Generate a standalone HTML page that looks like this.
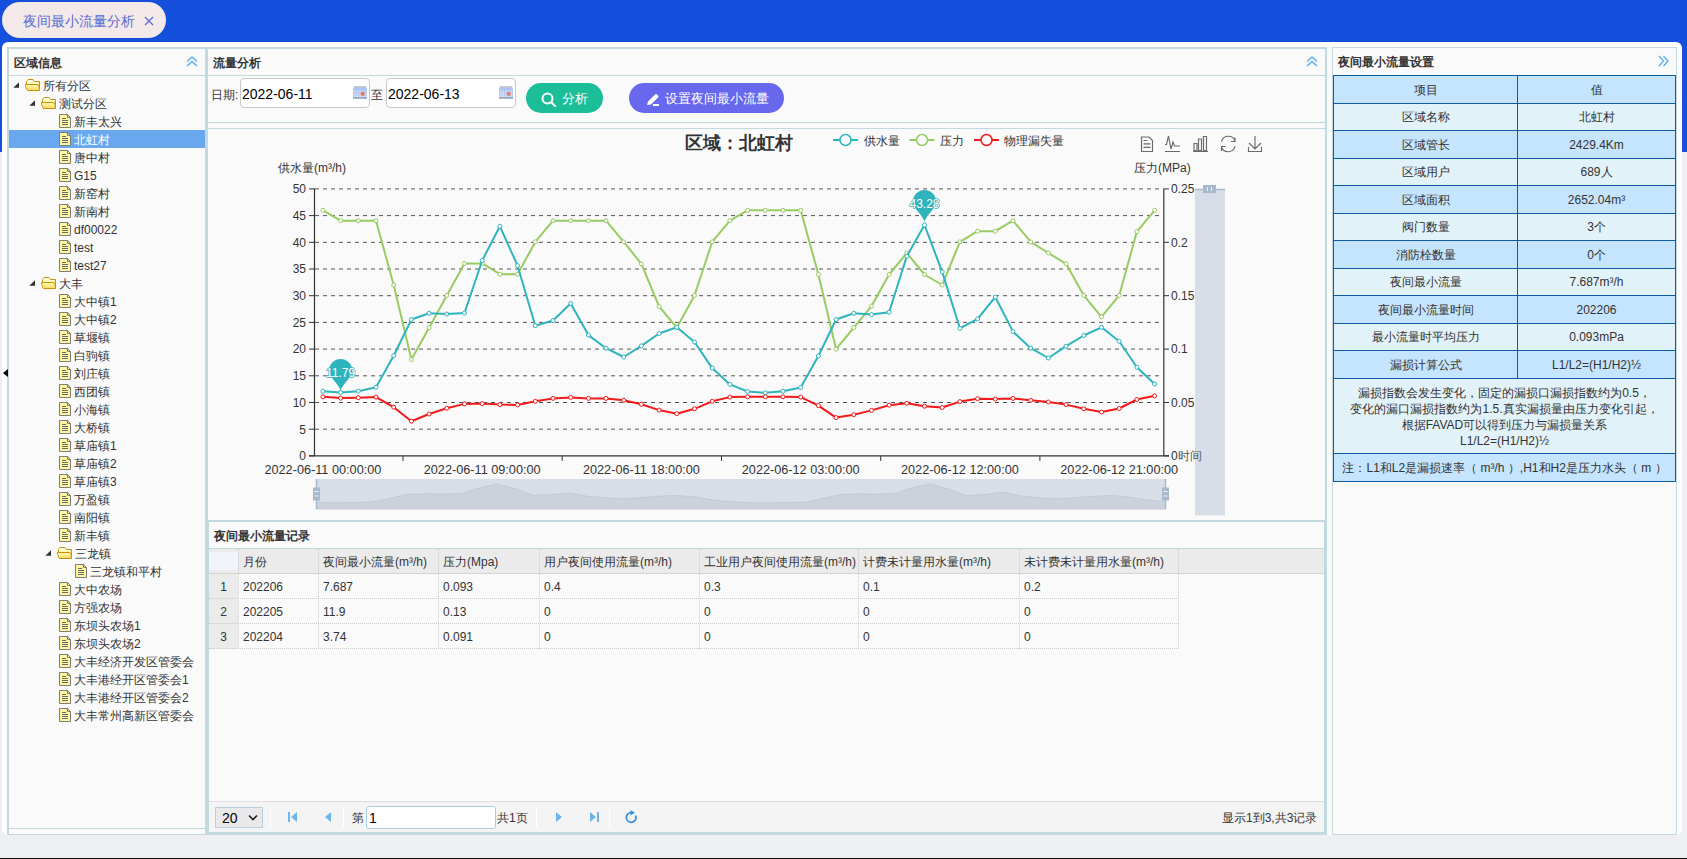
<!DOCTYPE html>
<html><head><meta charset="utf-8"><title>夜间最小流量分析</title>
<style>
*{margin:0;padding:0;box-sizing:border-box}
html,body{width:1687px;height:859px;overflow:hidden}
body{background:#eeeff3;font-family:"Liberation Sans",sans-serif;font-size:12px;color:#333;position:relative}
.a{position:absolute}
.t{position:absolute;white-space:nowrap;line-height:18px}
.tree .t{font-size:12px;color:#333}
.th{position:absolute;top:550px;height:24px;line-height:24px;font-size:12px;color:#333;white-space:nowrap;padding-left:5px;overflow:hidden}
.td{position:absolute;height:25px;line-height:25px;font-size:12px;color:#333;white-space:nowrap;padding-left:5px}
.rt{position:absolute;left:1333px;width:343px;border-top:1px solid #0f5aa5}
.rc{position:absolute;text-align:center;font-size:12px;color:#333;white-space:nowrap}
</style></head><body>

<div class="a" style="left:0;top:0;width:1687px;height:152px;background:#1550dc"></div>
<div class="a" style="left:2px;top:2px;width:164px;height:36px;border-radius:18px;background:#f3e9e9"></div>
<div class="t" style="left:23px;top:12px;font-size:14px;color:#5a6cd6">夜间最小流量分析</div>
<svg class="a" style="left:144px;top:16px" width="10" height="10"><path d="M1 1L9 9M9 1L1 9" stroke="#5a6cd6" stroke-width="1.3"/></svg>
<div class="a" style="left:2px;top:42px;width:1680px;height:793px;border-radius:6px;background:#fff"></div>
<div class="a" style="left:9px;top:49px;width:196px;height:785px;background:#fafafa"></div>
<div class="a" style="left:7px;top:47px;width:201px;height:2px;background:#c3d9e0"></div>
<div class="a" style="left:7px;top:47px;width:2px;height:788px;background:#c3d9e0"></div>
<div class="a" style="left:205px;top:47px;width:3px;height:788px;background:#c3d9e0"></div>
<div class="a" style="left:9px;top:75px;width:196px;height:1px;background:#c3d9e0"></div>
<div class="a" style="left:9px;top:828px;width:196px;height:1px;background:#c3d9e0"></div>
<div class="a" style="left:7px;top:834px;width:201px;height:1px;background:#c3d9e0"></div>
<div class="t" style="left:14px;top:54px;font-weight:bold;font-size:12px;color:#333">区域信息</div>
<svg class="a" style="left:186px;top:56px" width="12" height="11"><path d="M1 5.5L6 1L11 5.5M1 10L6 5.5L11 10" fill="none" stroke="#5aaef0" stroke-width="1.4"/></svg>
<svg class="a" style="left:2px;top:368px" width="7" height="10"><path d="M1 5L6 1L6 9Z" fill="#000"/></svg>
<div class="tree">
<svg class="a" style="left:13px;top:82px" width="7" height="7"><path d="M6 0.3L6 5.8L0.3 5.8Z" fill="#333"/></svg>
<svg class="a" style="left:25px;top:78px" width="16" height="14"><defs><linearGradient id="fb0" x1="0" y1="0" x2="0" y2="1"><stop offset="0" stop-color="#ffffff"/><stop offset="0.5" stop-color="#fff9a0"/><stop offset="1" stop-color="#f8d860"/></linearGradient><linearGradient id="ff0" x1="0" y1="0" x2="0" y2="1"><stop offset="0" stop-color="#fffbb0"/><stop offset="1" stop-color="#fbd862"/></linearGradient></defs><path d="M1.5 7V3.5L3 1.5H8L9.5 3.5H14.5V12" fill="url(#fb0)" stroke="#c8900c" stroke-width="1"/><path d="M0.5 6.5H12Q13.5 6.5 14 8L14.5 12.5H2.5L0.5 8.5Z" fill="url(#ff0)" stroke="#c8900c" stroke-width="1" stroke-linejoin="round"/></svg>
<div class="t" style="left:43px;top:77px;color:#333">所有分区</div>
<svg class="a" style="left:29px;top:100px" width="7" height="7"><path d="M6 0.3L6 5.8L0.3 5.8Z" fill="#333"/></svg>
<svg class="a" style="left:41px;top:96px" width="16" height="14"><defs><linearGradient id="fb1" x1="0" y1="0" x2="0" y2="1"><stop offset="0" stop-color="#ffffff"/><stop offset="0.5" stop-color="#fff9a0"/><stop offset="1" stop-color="#f8d860"/></linearGradient><linearGradient id="ff1" x1="0" y1="0" x2="0" y2="1"><stop offset="0" stop-color="#fffbb0"/><stop offset="1" stop-color="#fbd862"/></linearGradient></defs><path d="M1.5 7V3.5L3 1.5H8L9.5 3.5H14.5V12" fill="url(#fb1)" stroke="#c8900c" stroke-width="1"/><path d="M0.5 6.5H12Q13.5 6.5 14 8L14.5 12.5H2.5L0.5 8.5Z" fill="url(#ff1)" stroke="#c8900c" stroke-width="1" stroke-linejoin="round"/></svg>
<div class="t" style="left:59px;top:95px;color:#333">测试分区</div>
<svg class="a" style="left:59px;top:114px" width="13" height="15"><path d="M0.5 0.5L8.5 0.5L11.5 3.5L11.5 13.5L0.5 13.5Z" fill="#fff8a0" stroke="#7c7c7c" stroke-width="1"/><path d="M8.5 0.5V3.5H11.5" fill="none" stroke="#7c7c7c" stroke-width="1"/><path d="M3 4.5H7M3 6.5H9M3 8.5H9M3 10.5H9" stroke="#6a6a6a" stroke-width="1"/></svg>
<div class="t" style="left:74px;top:113px;color:#333">新丰太兴</div>
<div class="a" style="left:9px;top:130px;width:196px;height:18px;background:#69a8ef"></div>
<svg class="a" style="left:59px;top:132px" width="13" height="15"><path d="M0.5 0.5L8.5 0.5L11.5 3.5L11.5 13.5L0.5 13.5Z" fill="#fff8a0" stroke="#7c7c7c" stroke-width="1"/><path d="M8.5 0.5V3.5H11.5" fill="none" stroke="#7c7c7c" stroke-width="1"/><path d="M3 4.5H7M3 6.5H9M3 8.5H9M3 10.5H9" stroke="#6a6a6a" stroke-width="1"/></svg>
<div class="t" style="left:74px;top:131px;color:#fff">北虹村</div>
<svg class="a" style="left:59px;top:150px" width="13" height="15"><path d="M0.5 0.5L8.5 0.5L11.5 3.5L11.5 13.5L0.5 13.5Z" fill="#fff8a0" stroke="#7c7c7c" stroke-width="1"/><path d="M8.5 0.5V3.5H11.5" fill="none" stroke="#7c7c7c" stroke-width="1"/><path d="M3 4.5H7M3 6.5H9M3 8.5H9M3 10.5H9" stroke="#6a6a6a" stroke-width="1"/></svg>
<div class="t" style="left:74px;top:149px;color:#333">唐中村</div>
<svg class="a" style="left:59px;top:168px" width="13" height="15"><path d="M0.5 0.5L8.5 0.5L11.5 3.5L11.5 13.5L0.5 13.5Z" fill="#fff8a0" stroke="#7c7c7c" stroke-width="1"/><path d="M8.5 0.5V3.5H11.5" fill="none" stroke="#7c7c7c" stroke-width="1"/><path d="M3 4.5H7M3 6.5H9M3 8.5H9M3 10.5H9" stroke="#6a6a6a" stroke-width="1"/></svg>
<div class="t" style="left:74px;top:167px;color:#333">G15</div>
<svg class="a" style="left:59px;top:186px" width="13" height="15"><path d="M0.5 0.5L8.5 0.5L11.5 3.5L11.5 13.5L0.5 13.5Z" fill="#fff8a0" stroke="#7c7c7c" stroke-width="1"/><path d="M8.5 0.5V3.5H11.5" fill="none" stroke="#7c7c7c" stroke-width="1"/><path d="M3 4.5H7M3 6.5H9M3 8.5H9M3 10.5H9" stroke="#6a6a6a" stroke-width="1"/></svg>
<div class="t" style="left:74px;top:185px;color:#333">新窑村</div>
<svg class="a" style="left:59px;top:204px" width="13" height="15"><path d="M0.5 0.5L8.5 0.5L11.5 3.5L11.5 13.5L0.5 13.5Z" fill="#fff8a0" stroke="#7c7c7c" stroke-width="1"/><path d="M8.5 0.5V3.5H11.5" fill="none" stroke="#7c7c7c" stroke-width="1"/><path d="M3 4.5H7M3 6.5H9M3 8.5H9M3 10.5H9" stroke="#6a6a6a" stroke-width="1"/></svg>
<div class="t" style="left:74px;top:203px;color:#333">新南村</div>
<svg class="a" style="left:59px;top:222px" width="13" height="15"><path d="M0.5 0.5L8.5 0.5L11.5 3.5L11.5 13.5L0.5 13.5Z" fill="#fff8a0" stroke="#7c7c7c" stroke-width="1"/><path d="M8.5 0.5V3.5H11.5" fill="none" stroke="#7c7c7c" stroke-width="1"/><path d="M3 4.5H7M3 6.5H9M3 8.5H9M3 10.5H9" stroke="#6a6a6a" stroke-width="1"/></svg>
<div class="t" style="left:74px;top:221px;color:#333">df00022</div>
<svg class="a" style="left:59px;top:240px" width="13" height="15"><path d="M0.5 0.5L8.5 0.5L11.5 3.5L11.5 13.5L0.5 13.5Z" fill="#fff8a0" stroke="#7c7c7c" stroke-width="1"/><path d="M8.5 0.5V3.5H11.5" fill="none" stroke="#7c7c7c" stroke-width="1"/><path d="M3 4.5H7M3 6.5H9M3 8.5H9M3 10.5H9" stroke="#6a6a6a" stroke-width="1"/></svg>
<div class="t" style="left:74px;top:239px;color:#333">test</div>
<svg class="a" style="left:59px;top:258px" width="13" height="15"><path d="M0.5 0.5L8.5 0.5L11.5 3.5L11.5 13.5L0.5 13.5Z" fill="#fff8a0" stroke="#7c7c7c" stroke-width="1"/><path d="M8.5 0.5V3.5H11.5" fill="none" stroke="#7c7c7c" stroke-width="1"/><path d="M3 4.5H7M3 6.5H9M3 8.5H9M3 10.5H9" stroke="#6a6a6a" stroke-width="1"/></svg>
<div class="t" style="left:74px;top:257px;color:#333">test27</div>
<svg class="a" style="left:29px;top:280px" width="7" height="7"><path d="M6 0.3L6 5.8L0.3 5.8Z" fill="#333"/></svg>
<svg class="a" style="left:41px;top:276px" width="16" height="14"><defs><linearGradient id="fb11" x1="0" y1="0" x2="0" y2="1"><stop offset="0" stop-color="#ffffff"/><stop offset="0.5" stop-color="#fff9a0"/><stop offset="1" stop-color="#f8d860"/></linearGradient><linearGradient id="ff11" x1="0" y1="0" x2="0" y2="1"><stop offset="0" stop-color="#fffbb0"/><stop offset="1" stop-color="#fbd862"/></linearGradient></defs><path d="M1.5 7V3.5L3 1.5H8L9.5 3.5H14.5V12" fill="url(#fb11)" stroke="#c8900c" stroke-width="1"/><path d="M0.5 6.5H12Q13.5 6.5 14 8L14.5 12.5H2.5L0.5 8.5Z" fill="url(#ff11)" stroke="#c8900c" stroke-width="1" stroke-linejoin="round"/></svg>
<div class="t" style="left:59px;top:275px;color:#333">大丰</div>
<svg class="a" style="left:59px;top:294px" width="13" height="15"><path d="M0.5 0.5L8.5 0.5L11.5 3.5L11.5 13.5L0.5 13.5Z" fill="#fff8a0" stroke="#7c7c7c" stroke-width="1"/><path d="M8.5 0.5V3.5H11.5" fill="none" stroke="#7c7c7c" stroke-width="1"/><path d="M3 4.5H7M3 6.5H9M3 8.5H9M3 10.5H9" stroke="#6a6a6a" stroke-width="1"/></svg>
<div class="t" style="left:74px;top:293px;color:#333">大中镇1</div>
<svg class="a" style="left:59px;top:312px" width="13" height="15"><path d="M0.5 0.5L8.5 0.5L11.5 3.5L11.5 13.5L0.5 13.5Z" fill="#fff8a0" stroke="#7c7c7c" stroke-width="1"/><path d="M8.5 0.5V3.5H11.5" fill="none" stroke="#7c7c7c" stroke-width="1"/><path d="M3 4.5H7M3 6.5H9M3 8.5H9M3 10.5H9" stroke="#6a6a6a" stroke-width="1"/></svg>
<div class="t" style="left:74px;top:311px;color:#333">大中镇2</div>
<svg class="a" style="left:59px;top:330px" width="13" height="15"><path d="M0.5 0.5L8.5 0.5L11.5 3.5L11.5 13.5L0.5 13.5Z" fill="#fff8a0" stroke="#7c7c7c" stroke-width="1"/><path d="M8.5 0.5V3.5H11.5" fill="none" stroke="#7c7c7c" stroke-width="1"/><path d="M3 4.5H7M3 6.5H9M3 8.5H9M3 10.5H9" stroke="#6a6a6a" stroke-width="1"/></svg>
<div class="t" style="left:74px;top:329px;color:#333">草堰镇</div>
<svg class="a" style="left:59px;top:348px" width="13" height="15"><path d="M0.5 0.5L8.5 0.5L11.5 3.5L11.5 13.5L0.5 13.5Z" fill="#fff8a0" stroke="#7c7c7c" stroke-width="1"/><path d="M8.5 0.5V3.5H11.5" fill="none" stroke="#7c7c7c" stroke-width="1"/><path d="M3 4.5H7M3 6.5H9M3 8.5H9M3 10.5H9" stroke="#6a6a6a" stroke-width="1"/></svg>
<div class="t" style="left:74px;top:347px;color:#333">白驹镇</div>
<svg class="a" style="left:59px;top:366px" width="13" height="15"><path d="M0.5 0.5L8.5 0.5L11.5 3.5L11.5 13.5L0.5 13.5Z" fill="#fff8a0" stroke="#7c7c7c" stroke-width="1"/><path d="M8.5 0.5V3.5H11.5" fill="none" stroke="#7c7c7c" stroke-width="1"/><path d="M3 4.5H7M3 6.5H9M3 8.5H9M3 10.5H9" stroke="#6a6a6a" stroke-width="1"/></svg>
<div class="t" style="left:74px;top:365px;color:#333">刘庄镇</div>
<svg class="a" style="left:59px;top:384px" width="13" height="15"><path d="M0.5 0.5L8.5 0.5L11.5 3.5L11.5 13.5L0.5 13.5Z" fill="#fff8a0" stroke="#7c7c7c" stroke-width="1"/><path d="M8.5 0.5V3.5H11.5" fill="none" stroke="#7c7c7c" stroke-width="1"/><path d="M3 4.5H7M3 6.5H9M3 8.5H9M3 10.5H9" stroke="#6a6a6a" stroke-width="1"/></svg>
<div class="t" style="left:74px;top:383px;color:#333">西团镇</div>
<svg class="a" style="left:59px;top:402px" width="13" height="15"><path d="M0.5 0.5L8.5 0.5L11.5 3.5L11.5 13.5L0.5 13.5Z" fill="#fff8a0" stroke="#7c7c7c" stroke-width="1"/><path d="M8.5 0.5V3.5H11.5" fill="none" stroke="#7c7c7c" stroke-width="1"/><path d="M3 4.5H7M3 6.5H9M3 8.5H9M3 10.5H9" stroke="#6a6a6a" stroke-width="1"/></svg>
<div class="t" style="left:74px;top:401px;color:#333">小海镇</div>
<svg class="a" style="left:59px;top:420px" width="13" height="15"><path d="M0.5 0.5L8.5 0.5L11.5 3.5L11.5 13.5L0.5 13.5Z" fill="#fff8a0" stroke="#7c7c7c" stroke-width="1"/><path d="M8.5 0.5V3.5H11.5" fill="none" stroke="#7c7c7c" stroke-width="1"/><path d="M3 4.5H7M3 6.5H9M3 8.5H9M3 10.5H9" stroke="#6a6a6a" stroke-width="1"/></svg>
<div class="t" style="left:74px;top:419px;color:#333">大桥镇</div>
<svg class="a" style="left:59px;top:438px" width="13" height="15"><path d="M0.5 0.5L8.5 0.5L11.5 3.5L11.5 13.5L0.5 13.5Z" fill="#fff8a0" stroke="#7c7c7c" stroke-width="1"/><path d="M8.5 0.5V3.5H11.5" fill="none" stroke="#7c7c7c" stroke-width="1"/><path d="M3 4.5H7M3 6.5H9M3 8.5H9M3 10.5H9" stroke="#6a6a6a" stroke-width="1"/></svg>
<div class="t" style="left:74px;top:437px;color:#333">草庙镇1</div>
<svg class="a" style="left:59px;top:456px" width="13" height="15"><path d="M0.5 0.5L8.5 0.5L11.5 3.5L11.5 13.5L0.5 13.5Z" fill="#fff8a0" stroke="#7c7c7c" stroke-width="1"/><path d="M8.5 0.5V3.5H11.5" fill="none" stroke="#7c7c7c" stroke-width="1"/><path d="M3 4.5H7M3 6.5H9M3 8.5H9M3 10.5H9" stroke="#6a6a6a" stroke-width="1"/></svg>
<div class="t" style="left:74px;top:455px;color:#333">草庙镇2</div>
<svg class="a" style="left:59px;top:474px" width="13" height="15"><path d="M0.5 0.5L8.5 0.5L11.5 3.5L11.5 13.5L0.5 13.5Z" fill="#fff8a0" stroke="#7c7c7c" stroke-width="1"/><path d="M8.5 0.5V3.5H11.5" fill="none" stroke="#7c7c7c" stroke-width="1"/><path d="M3 4.5H7M3 6.5H9M3 8.5H9M3 10.5H9" stroke="#6a6a6a" stroke-width="1"/></svg>
<div class="t" style="left:74px;top:473px;color:#333">草庙镇3</div>
<svg class="a" style="left:59px;top:492px" width="13" height="15"><path d="M0.5 0.5L8.5 0.5L11.5 3.5L11.5 13.5L0.5 13.5Z" fill="#fff8a0" stroke="#7c7c7c" stroke-width="1"/><path d="M8.5 0.5V3.5H11.5" fill="none" stroke="#7c7c7c" stroke-width="1"/><path d="M3 4.5H7M3 6.5H9M3 8.5H9M3 10.5H9" stroke="#6a6a6a" stroke-width="1"/></svg>
<div class="t" style="left:74px;top:491px;color:#333">万盈镇</div>
<svg class="a" style="left:59px;top:510px" width="13" height="15"><path d="M0.5 0.5L8.5 0.5L11.5 3.5L11.5 13.5L0.5 13.5Z" fill="#fff8a0" stroke="#7c7c7c" stroke-width="1"/><path d="M8.5 0.5V3.5H11.5" fill="none" stroke="#7c7c7c" stroke-width="1"/><path d="M3 4.5H7M3 6.5H9M3 8.5H9M3 10.5H9" stroke="#6a6a6a" stroke-width="1"/></svg>
<div class="t" style="left:74px;top:509px;color:#333">南阳镇</div>
<svg class="a" style="left:59px;top:528px" width="13" height="15"><path d="M0.5 0.5L8.5 0.5L11.5 3.5L11.5 13.5L0.5 13.5Z" fill="#fff8a0" stroke="#7c7c7c" stroke-width="1"/><path d="M8.5 0.5V3.5H11.5" fill="none" stroke="#7c7c7c" stroke-width="1"/><path d="M3 4.5H7M3 6.5H9M3 8.5H9M3 10.5H9" stroke="#6a6a6a" stroke-width="1"/></svg>
<div class="t" style="left:74px;top:527px;color:#333">新丰镇</div>
<svg class="a" style="left:45px;top:550px" width="7" height="7"><path d="M6 0.3L6 5.8L0.3 5.8Z" fill="#333"/></svg>
<svg class="a" style="left:57px;top:546px" width="16" height="14"><defs><linearGradient id="fb26" x1="0" y1="0" x2="0" y2="1"><stop offset="0" stop-color="#ffffff"/><stop offset="0.5" stop-color="#fff9a0"/><stop offset="1" stop-color="#f8d860"/></linearGradient><linearGradient id="ff26" x1="0" y1="0" x2="0" y2="1"><stop offset="0" stop-color="#fffbb0"/><stop offset="1" stop-color="#fbd862"/></linearGradient></defs><path d="M1.5 7V3.5L3 1.5H8L9.5 3.5H14.5V12" fill="url(#fb26)" stroke="#c8900c" stroke-width="1"/><path d="M0.5 6.5H12Q13.5 6.5 14 8L14.5 12.5H2.5L0.5 8.5Z" fill="url(#ff26)" stroke="#c8900c" stroke-width="1" stroke-linejoin="round"/></svg>
<div class="t" style="left:75px;top:545px;color:#333">三龙镇</div>
<svg class="a" style="left:75px;top:564px" width="13" height="15"><path d="M0.5 0.5L8.5 0.5L11.5 3.5L11.5 13.5L0.5 13.5Z" fill="#fff8a0" stroke="#7c7c7c" stroke-width="1"/><path d="M8.5 0.5V3.5H11.5" fill="none" stroke="#7c7c7c" stroke-width="1"/><path d="M3 4.5H7M3 6.5H9M3 8.5H9M3 10.5H9" stroke="#6a6a6a" stroke-width="1"/></svg>
<div class="t" style="left:90px;top:563px;color:#333">三龙镇和平村</div>
<svg class="a" style="left:59px;top:582px" width="13" height="15"><path d="M0.5 0.5L8.5 0.5L11.5 3.5L11.5 13.5L0.5 13.5Z" fill="#fff8a0" stroke="#7c7c7c" stroke-width="1"/><path d="M8.5 0.5V3.5H11.5" fill="none" stroke="#7c7c7c" stroke-width="1"/><path d="M3 4.5H7M3 6.5H9M3 8.5H9M3 10.5H9" stroke="#6a6a6a" stroke-width="1"/></svg>
<div class="t" style="left:74px;top:581px;color:#333">大中农场</div>
<svg class="a" style="left:59px;top:600px" width="13" height="15"><path d="M0.5 0.5L8.5 0.5L11.5 3.5L11.5 13.5L0.5 13.5Z" fill="#fff8a0" stroke="#7c7c7c" stroke-width="1"/><path d="M8.5 0.5V3.5H11.5" fill="none" stroke="#7c7c7c" stroke-width="1"/><path d="M3 4.5H7M3 6.5H9M3 8.5H9M3 10.5H9" stroke="#6a6a6a" stroke-width="1"/></svg>
<div class="t" style="left:74px;top:599px;color:#333">方强农场</div>
<svg class="a" style="left:59px;top:618px" width="13" height="15"><path d="M0.5 0.5L8.5 0.5L11.5 3.5L11.5 13.5L0.5 13.5Z" fill="#fff8a0" stroke="#7c7c7c" stroke-width="1"/><path d="M8.5 0.5V3.5H11.5" fill="none" stroke="#7c7c7c" stroke-width="1"/><path d="M3 4.5H7M3 6.5H9M3 8.5H9M3 10.5H9" stroke="#6a6a6a" stroke-width="1"/></svg>
<div class="t" style="left:74px;top:617px;color:#333">东坝头农场1</div>
<svg class="a" style="left:59px;top:636px" width="13" height="15"><path d="M0.5 0.5L8.5 0.5L11.5 3.5L11.5 13.5L0.5 13.5Z" fill="#fff8a0" stroke="#7c7c7c" stroke-width="1"/><path d="M8.5 0.5V3.5H11.5" fill="none" stroke="#7c7c7c" stroke-width="1"/><path d="M3 4.5H7M3 6.5H9M3 8.5H9M3 10.5H9" stroke="#6a6a6a" stroke-width="1"/></svg>
<div class="t" style="left:74px;top:635px;color:#333">东坝头农场2</div>
<svg class="a" style="left:59px;top:654px" width="13" height="15"><path d="M0.5 0.5L8.5 0.5L11.5 3.5L11.5 13.5L0.5 13.5Z" fill="#fff8a0" stroke="#7c7c7c" stroke-width="1"/><path d="M8.5 0.5V3.5H11.5" fill="none" stroke="#7c7c7c" stroke-width="1"/><path d="M3 4.5H7M3 6.5H9M3 8.5H9M3 10.5H9" stroke="#6a6a6a" stroke-width="1"/></svg>
<div class="t" style="left:74px;top:653px;color:#333">大丰经济开发区管委会</div>
<svg class="a" style="left:59px;top:672px" width="13" height="15"><path d="M0.5 0.5L8.5 0.5L11.5 3.5L11.5 13.5L0.5 13.5Z" fill="#fff8a0" stroke="#7c7c7c" stroke-width="1"/><path d="M8.5 0.5V3.5H11.5" fill="none" stroke="#7c7c7c" stroke-width="1"/><path d="M3 4.5H7M3 6.5H9M3 8.5H9M3 10.5H9" stroke="#6a6a6a" stroke-width="1"/></svg>
<div class="t" style="left:74px;top:671px;color:#333">大丰港经开区管委会1</div>
<svg class="a" style="left:59px;top:690px" width="13" height="15"><path d="M0.5 0.5L8.5 0.5L11.5 3.5L11.5 13.5L0.5 13.5Z" fill="#fff8a0" stroke="#7c7c7c" stroke-width="1"/><path d="M8.5 0.5V3.5H11.5" fill="none" stroke="#7c7c7c" stroke-width="1"/><path d="M3 4.5H7M3 6.5H9M3 8.5H9M3 10.5H9" stroke="#6a6a6a" stroke-width="1"/></svg>
<div class="t" style="left:74px;top:689px;color:#333">大丰港经开区管委会2</div>
<svg class="a" style="left:59px;top:708px" width="13" height="15"><path d="M0.5 0.5L8.5 0.5L11.5 3.5L11.5 13.5L0.5 13.5Z" fill="#fff8a0" stroke="#7c7c7c" stroke-width="1"/><path d="M8.5 0.5V3.5H11.5" fill="none" stroke="#7c7c7c" stroke-width="1"/><path d="M3 4.5H7M3 6.5H9M3 8.5H9M3 10.5H9" stroke="#6a6a6a" stroke-width="1"/></svg>
<div class="t" style="left:74px;top:707px;color:#333">大丰常州高新区管委会</div>
</div>
<div class="a" style="left:208px;top:49px;width:1117px;height:783px;background:#fafafa"></div>
<div class="a" style="left:208px;top:47px;width:1119px;height:2px;background:#c3d9e0"></div>
<div class="a" style="left:1327px;top:47px;width:5px;height:788px;background:#fafafa"></div>
<div class="a" style="left:1325px;top:47px;width:2px;height:475px;background:#c3d9e0"></div>
<div class="a" style="left:1324px;top:522px;width:3px;height:313px;background:#c3d9e0"></div>
<div class="a" style="left:208px;top:522px;width:1px;height:313px;background:#c3d9e0"></div>
<div class="a" style="left:208px;top:832px;width:1119px;height:3px;background:#c3d9e0"></div>
<div class="a" style="left:208px;top:75px;width:1117px;height:1px;background:#c3d9e0"></div>
<div class="a" style="left:208px;top:122px;width:1117px;height:1px;background:#c3d9e0"></div>
<div class="a" style="left:208px;top:128px;width:1117px;height:1px;background:#c3d9e0"></div>
<div class="a" style="left:208px;top:520px;width:1117px;height:2px;background:#c3d9e0"></div>
<div class="a" style="left:208px;top:548px;width:1117px;height:1px;background:#c3d9e0"></div>
<div class="t" style="left:213px;top:54px;font-weight:bold;font-size:12px;color:#333">流量分析</div>
<svg class="a" style="left:1306px;top:56px" width="12" height="11"><path d="M1 5.5L6 1L11 5.5M1 10L6 5.5L11 10" fill="none" stroke="#5aaef0" stroke-width="1.4"/></svg>
<div class="t" style="left:211px;top:86px;font-size:12px;color:#333">日期:</div>
<div class="a" style="left:240px;top:78px;width:130px;height:30px;border:1px solid #c8c8c8;border-radius:4px;background:#fff"></div>
<div class="t" style="left:242px;top:85px;font-size:14px;color:#000">2022-06-11</div>
<svg class="a" style="left:353px;top:86px" width="14" height="13"><defs><linearGradient id="cg353" x1="0" y1="0" x2="0" y2="1"><stop offset="0" stop-color="#a9c2f4"/><stop offset="1" stop-color="#c4d3ee"/></linearGradient></defs><rect x="1" y="0" width="12" height="2" fill="#c9c9c9"/><rect x="0" y="1.5" width="14" height="11" fill="url(#cg353)"/><rect x="0" y="11" width="14" height="1.8" fill="#9aa9c2"/><path d="M1 5.2H13M1 7.8H13M1 10.2H13" stroke="#fff" stroke-width="0.9" stroke-dasharray="1.2 1.6" opacity="0.85"/><circle cx="9.7" cy="7.8" r="2.1" fill="#e87a5a"/></svg>
<div class="a" style="left:386px;top:78px;width:130px;height:30px;border:1px solid #c8c8c8;border-radius:4px;background:#fff"></div>
<div class="t" style="left:388px;top:85px;font-size:14px;color:#000">2022-06-13</div>
<svg class="a" style="left:499px;top:86px" width="14" height="13"><defs><linearGradient id="cg499" x1="0" y1="0" x2="0" y2="1"><stop offset="0" stop-color="#a9c2f4"/><stop offset="1" stop-color="#c4d3ee"/></linearGradient></defs><rect x="1" y="0" width="12" height="2" fill="#c9c9c9"/><rect x="0" y="1.5" width="14" height="11" fill="url(#cg499)"/><rect x="0" y="11" width="14" height="1.8" fill="#9aa9c2"/><path d="M1 5.2H13M1 7.8H13M1 10.2H13" stroke="#fff" stroke-width="0.9" stroke-dasharray="1.2 1.6" opacity="0.85"/><circle cx="9.7" cy="7.8" r="2.1" fill="#e87a5a"/></svg>
<div class="t" style="left:371px;top:86px;font-size:12px;color:#333">至</div>
<div class="a" style="left:526px;top:83px;width:77px;height:30px;border-radius:15px;background:#1bbe96"></div>
<svg class="a" style="left:541px;top:92px" width="16" height="16"><circle cx="6.5" cy="6.5" r="5" fill="none" stroke="#fff" stroke-width="2"/><path d="M10 10L14 14" stroke="#fff" stroke-width="2.2" stroke-linecap="round"/></svg>
<div class="t" style="left:562px;top:90px;font-size:13px;color:#fff">分析</div>
<div class="a" style="left:629px;top:83px;width:155px;height:30px;border-radius:15px;background:#6868ee"></div>
<svg class="a" style="left:645px;top:92px" width="16" height="16"><path d="M2 13L3 9.5L10 2.5Q11 1.5 12 2.5L13 3.5Q14 4.5 13 5.5L6 12.5Z" fill="#fff"/><rect x="8" y="12" width="6" height="2" fill="#fff"/></svg>
<div class="t" style="left:665px;top:90px;font-size:13px;color:#fff">设置夜间最小流量</div>
<svg class="a" style="left:0;top:0" width="1687" height="859" font-family="Liberation Sans, sans-serif">
<text x="685" y="149" font-size="18" font-weight="bold" fill="#333">区域：北虹村</text>
<path d="M833 140H858" stroke="#2fb4be" stroke-width="2"/><circle cx="845.5" cy="140" r="5.5" fill="#fafafa" stroke="#2fb4be" stroke-width="1.5"/>
<text x="864" y="144.5" font-size="12" fill="#333">供水量</text>
<path d="M909.5 140H934.5" stroke="#97cc62" stroke-width="2"/><circle cx="922.0" cy="140" r="5.5" fill="#fafafa" stroke="#97cc62" stroke-width="1.5"/>
<text x="939.5" y="144.5" font-size="12" fill="#333">压力</text>
<path d="M974 140H999" stroke="#f21a1a" stroke-width="2"/><circle cx="986.5" cy="140" r="5.5" fill="#fafafa" stroke="#f21a1a" stroke-width="1.5"/>
<text x="1004" y="144.5" font-size="12" fill="#333">物理漏失量</text>
<path d="M1141.5 137H1149L1152.5 140.5V151.5H1141.5Z M1143.5 140.5H1147.5 M1143.5 143.8H1150.5 M1143.5 147.3H1150.5" fill="none" stroke="#6a6a6a" stroke-width="1.15"/>
<path d="M1165 144.5H1166.5L1168.5 136L1171 149L1173 142L1174.5 146H1180 M1165 151.5H1180" fill="none" stroke="#6a6a6a" stroke-width="1.15"/>
<path d="M1194 143.5H1197V150.5H1194Z M1198.5 139H1201.5V150.5H1198.5Z M1203.5 136.5H1206.5V150.5H1203.5Z M1193 151.5H1208" fill="none" stroke="#6a6a6a" stroke-width="1.15"/>
<path d="M1235 141A7 7 0 0 0 1221.5 142 M1221.5 147A7 7 0 0 0 1235 146 M1235 137.5V141.5H1231 M1221.5 151V146.5H1225.5" fill="none" stroke="#6a6a6a" stroke-width="1.15"/>
<path d="M1255 136V149 M1249 143L1255 149L1261 143 M1248.5 147V151.5H1261.5V147" fill="none" stroke="#6a6a6a" stroke-width="1.15"/>
<text x="278" y="172" font-size="12" fill="#333">供水量(m³/h)</text>
<text x="1134" y="172" font-size="12" fill="#333">压力(MPa)</text>
<path d="M315 188.9H1163" stroke="#555" stroke-dasharray="4 4"/>
<path d="M315 215.6H1163" stroke="#555" stroke-dasharray="4 4"/>
<path d="M315 242.3H1163" stroke="#555" stroke-dasharray="4 4"/>
<path d="M315 269.0H1163" stroke="#555" stroke-dasharray="4 4"/>
<path d="M315 295.7H1163" stroke="#555" stroke-dasharray="4 4"/>
<path d="M315 322.4H1163" stroke="#555" stroke-dasharray="4 4"/>
<path d="M315 349.1H1163" stroke="#555" stroke-dasharray="4 4"/>
<path d="M315 375.8H1163" stroke="#555" stroke-dasharray="4 4"/>
<path d="M315 402.5H1163" stroke="#555" stroke-dasharray="4 4"/>
<path d="M315 429.2H1163" stroke="#555" stroke-dasharray="4 4"/>
<path d="M309 188.9H314.5" stroke="#333"/>
<text x="306" y="193.2" font-size="12" fill="#333" text-anchor="end">50</text>
<path d="M309 215.6H314.5" stroke="#333"/>
<text x="306" y="219.9" font-size="12" fill="#333" text-anchor="end">45</text>
<path d="M309 242.3H314.5" stroke="#333"/>
<text x="306" y="246.6" font-size="12" fill="#333" text-anchor="end">40</text>
<path d="M309 269.0H314.5" stroke="#333"/>
<text x="306" y="273.3" font-size="12" fill="#333" text-anchor="end">35</text>
<path d="M309 295.7H314.5" stroke="#333"/>
<text x="306" y="300.0" font-size="12" fill="#333" text-anchor="end">30</text>
<path d="M309 322.4H314.5" stroke="#333"/>
<text x="306" y="326.7" font-size="12" fill="#333" text-anchor="end">25</text>
<path d="M309 349.1H314.5" stroke="#333"/>
<text x="306" y="353.4" font-size="12" fill="#333" text-anchor="end">20</text>
<path d="M309 375.8H314.5" stroke="#333"/>
<text x="306" y="380.1" font-size="12" fill="#333" text-anchor="end">15</text>
<path d="M309 402.5H314.5" stroke="#333"/>
<text x="306" y="406.8" font-size="12" fill="#333" text-anchor="end">10</text>
<path d="M309 429.2H314.5" stroke="#333"/>
<text x="306" y="433.5" font-size="12" fill="#333" text-anchor="end">5</text>
<path d="M309 455.9H314.5" stroke="#333"/>
<text x="306" y="460.2" font-size="12" fill="#333" text-anchor="end">0</text>
<path d="M1164 188.9H1169" stroke="#333"/>
<text x="1171" y="193.2" font-size="12" fill="#333">0.25</text>
<path d="M1164 242.3H1169" stroke="#333"/>
<text x="1171" y="246.6" font-size="12" fill="#333">0.2</text>
<path d="M1164 295.7H1169" stroke="#333"/>
<text x="1171" y="300.0" font-size="12" fill="#333">0.15</text>
<path d="M1164 349.1H1169" stroke="#333"/>
<text x="1171" y="353.4" font-size="12" fill="#333">0.1</text>
<path d="M1164 402.5H1169" stroke="#333"/>
<text x="1171" y="406.8" font-size="12" fill="#333">0.05</text>
<path d="M1164 455.9H1169" stroke="#333"/>
<text x="1171" y="460.2" font-size="12" fill="#333">0</text>
<path d="M314.5 188.4V455.9" stroke="#333" stroke-width="1.2"/>
<path d="M1163.8 188.4V455.9" stroke="#333" stroke-width="1.2"/>
<path d="M309 455.9H1169" stroke="#333" stroke-width="1.2"/>
<path d="M403.0 455.9V460.9" stroke="#333"/>
<path d="M562.2 455.9V460.9" stroke="#333"/>
<path d="M721.5 455.9V460.9" stroke="#333"/>
<path d="M880.7 455.9V460.9" stroke="#333"/>
<path d="M1039.9 455.9V460.9" stroke="#333"/>
<text x="322.9" y="473.8" font-size="12.7" fill="#333" text-anchor="middle">2022-06-11 00:00:00</text>
<text x="482.2" y="473.8" font-size="12.7" fill="#333" text-anchor="middle">2022-06-11 09:00:00</text>
<text x="641.4" y="473.8" font-size="12.7" fill="#333" text-anchor="middle">2022-06-11 18:00:00</text>
<text x="800.7" y="473.8" font-size="12.7" fill="#333" text-anchor="middle">2022-06-12 03:00:00</text>
<text x="959.9" y="473.8" font-size="12.7" fill="#333" text-anchor="middle">2022-06-12 12:00:00</text>
<text x="1119.2" y="473.8" font-size="12.7" fill="#333" text-anchor="middle">2022-06-12 21:00:00</text>
<polyline points="322.9,210.3 340.6,220.7 358.3,220.7 376.0,220.7 393.7,285.0 411.4,359.6 429.1,327.7 446.8,295.4 464.5,263.4 482.2,263.4 499.9,274.2 517.6,274.2 535.3,241.9 553.0,220.7 570.7,220.7 588.4,220.7 606.0,220.7 623.7,241.9 641.4,263.8 659.1,306.5 676.8,327.7 694.5,295.4 712.2,241.9 729.9,220.7 747.6,210.3 765.3,210.3 783.0,210.3 800.7,210.3 818.4,274.5 836.1,349.2 853.8,327.7 871.5,306.1 889.1,274.5 906.8,253.0 924.5,274.5 942.2,285.0 959.9,241.9 977.6,231.2 995.3,231.2 1013.0,220.7 1030.7,241.9 1048.4,253.0 1066.1,263.8 1083.8,295.4 1101.5,316.9 1119.2,295.4 1136.9,231.6 1154.6,210.3" fill="none" stroke="#97cc62" stroke-width="2" stroke-linejoin="round"/>
<circle cx="322.9" cy="210.3" r="2" fill="#fff" stroke="#97cc62" stroke-width="1"/>
<circle cx="340.6" cy="220.7" r="2" fill="#fff" stroke="#97cc62" stroke-width="1"/>
<circle cx="358.3" cy="220.7" r="2" fill="#fff" stroke="#97cc62" stroke-width="1"/>
<circle cx="376.0" cy="220.7" r="2" fill="#fff" stroke="#97cc62" stroke-width="1"/>
<circle cx="393.7" cy="285.0" r="2" fill="#fff" stroke="#97cc62" stroke-width="1"/>
<circle cx="411.4" cy="359.6" r="2" fill="#fff" stroke="#97cc62" stroke-width="1"/>
<circle cx="429.1" cy="327.7" r="2" fill="#fff" stroke="#97cc62" stroke-width="1"/>
<circle cx="446.8" cy="295.4" r="2" fill="#fff" stroke="#97cc62" stroke-width="1"/>
<circle cx="464.5" cy="263.4" r="2" fill="#fff" stroke="#97cc62" stroke-width="1"/>
<circle cx="482.2" cy="263.4" r="2" fill="#fff" stroke="#97cc62" stroke-width="1"/>
<circle cx="499.9" cy="274.2" r="2" fill="#fff" stroke="#97cc62" stroke-width="1"/>
<circle cx="517.6" cy="274.2" r="2" fill="#fff" stroke="#97cc62" stroke-width="1"/>
<circle cx="535.3" cy="241.9" r="2" fill="#fff" stroke="#97cc62" stroke-width="1"/>
<circle cx="553.0" cy="220.7" r="2" fill="#fff" stroke="#97cc62" stroke-width="1"/>
<circle cx="570.7" cy="220.7" r="2" fill="#fff" stroke="#97cc62" stroke-width="1"/>
<circle cx="588.4" cy="220.7" r="2" fill="#fff" stroke="#97cc62" stroke-width="1"/>
<circle cx="606.0" cy="220.7" r="2" fill="#fff" stroke="#97cc62" stroke-width="1"/>
<circle cx="623.7" cy="241.9" r="2" fill="#fff" stroke="#97cc62" stroke-width="1"/>
<circle cx="641.4" cy="263.8" r="2" fill="#fff" stroke="#97cc62" stroke-width="1"/>
<circle cx="659.1" cy="306.5" r="2" fill="#fff" stroke="#97cc62" stroke-width="1"/>
<circle cx="676.8" cy="327.7" r="2" fill="#fff" stroke="#97cc62" stroke-width="1"/>
<circle cx="694.5" cy="295.4" r="2" fill="#fff" stroke="#97cc62" stroke-width="1"/>
<circle cx="712.2" cy="241.9" r="2" fill="#fff" stroke="#97cc62" stroke-width="1"/>
<circle cx="729.9" cy="220.7" r="2" fill="#fff" stroke="#97cc62" stroke-width="1"/>
<circle cx="747.6" cy="210.3" r="2" fill="#fff" stroke="#97cc62" stroke-width="1"/>
<circle cx="765.3" cy="210.3" r="2" fill="#fff" stroke="#97cc62" stroke-width="1"/>
<circle cx="783.0" cy="210.3" r="2" fill="#fff" stroke="#97cc62" stroke-width="1"/>
<circle cx="800.7" cy="210.3" r="2" fill="#fff" stroke="#97cc62" stroke-width="1"/>
<circle cx="818.4" cy="274.5" r="2" fill="#fff" stroke="#97cc62" stroke-width="1"/>
<circle cx="836.1" cy="349.2" r="2" fill="#fff" stroke="#97cc62" stroke-width="1"/>
<circle cx="853.8" cy="327.7" r="2" fill="#fff" stroke="#97cc62" stroke-width="1"/>
<circle cx="871.5" cy="306.1" r="2" fill="#fff" stroke="#97cc62" stroke-width="1"/>
<circle cx="889.1" cy="274.5" r="2" fill="#fff" stroke="#97cc62" stroke-width="1"/>
<circle cx="906.8" cy="253.0" r="2" fill="#fff" stroke="#97cc62" stroke-width="1"/>
<circle cx="924.5" cy="274.5" r="2" fill="#fff" stroke="#97cc62" stroke-width="1"/>
<circle cx="942.2" cy="285.0" r="2" fill="#fff" stroke="#97cc62" stroke-width="1"/>
<circle cx="959.9" cy="241.9" r="2" fill="#fff" stroke="#97cc62" stroke-width="1"/>
<circle cx="977.6" cy="231.2" r="2" fill="#fff" stroke="#97cc62" stroke-width="1"/>
<circle cx="995.3" cy="231.2" r="2" fill="#fff" stroke="#97cc62" stroke-width="1"/>
<circle cx="1013.0" cy="220.7" r="2" fill="#fff" stroke="#97cc62" stroke-width="1"/>
<circle cx="1030.7" cy="241.9" r="2" fill="#fff" stroke="#97cc62" stroke-width="1"/>
<circle cx="1048.4" cy="253.0" r="2" fill="#fff" stroke="#97cc62" stroke-width="1"/>
<circle cx="1066.1" cy="263.8" r="2" fill="#fff" stroke="#97cc62" stroke-width="1"/>
<circle cx="1083.8" cy="295.4" r="2" fill="#fff" stroke="#97cc62" stroke-width="1"/>
<circle cx="1101.5" cy="316.9" r="2" fill="#fff" stroke="#97cc62" stroke-width="1"/>
<circle cx="1119.2" cy="295.4" r="2" fill="#fff" stroke="#97cc62" stroke-width="1"/>
<circle cx="1136.9" cy="231.6" r="2" fill="#fff" stroke="#97cc62" stroke-width="1"/>
<circle cx="1154.6" cy="210.3" r="2" fill="#fff" stroke="#97cc62" stroke-width="1"/>
<polyline points="322.9,391.2 340.6,392.5 358.3,391.2 376.0,387.3 393.7,355.7 411.4,319.5 429.1,313.3 446.8,314.0 464.5,313.0 482.2,260.5 499.9,226.3 517.6,265.7 535.3,325.7 553.0,320.5 570.7,303.5 588.4,335.1 606.0,348.2 623.7,357.0 641.4,345.9 659.1,333.5 676.8,327.3 694.5,342.0 712.2,368.1 729.9,384.4 747.6,391.5 765.3,392.8 783.0,391.2 800.7,387.6 818.4,356.0 836.1,319.5 853.8,313.3 871.5,314.6 889.1,312.3 906.8,256.3 924.5,225.0 942.2,271.9 959.9,328.3 977.6,318.9 995.3,297.0 1013.0,331.6 1030.7,348.2 1048.4,358.0 1066.1,346.2 1083.8,335.5 1101.5,327.3 1119.2,341.3 1136.9,367.2 1154.6,384.0" fill="none" stroke="#2fb4be" stroke-width="2" stroke-linejoin="round"/>
<circle cx="322.9" cy="391.2" r="2" fill="#fff" stroke="#2fb4be" stroke-width="1"/>
<circle cx="340.6" cy="392.5" r="2" fill="#fff" stroke="#2fb4be" stroke-width="1"/>
<circle cx="358.3" cy="391.2" r="2" fill="#fff" stroke="#2fb4be" stroke-width="1"/>
<circle cx="376.0" cy="387.3" r="2" fill="#fff" stroke="#2fb4be" stroke-width="1"/>
<circle cx="393.7" cy="355.7" r="2" fill="#fff" stroke="#2fb4be" stroke-width="1"/>
<circle cx="411.4" cy="319.5" r="2" fill="#fff" stroke="#2fb4be" stroke-width="1"/>
<circle cx="429.1" cy="313.3" r="2" fill="#fff" stroke="#2fb4be" stroke-width="1"/>
<circle cx="446.8" cy="314.0" r="2" fill="#fff" stroke="#2fb4be" stroke-width="1"/>
<circle cx="464.5" cy="313.0" r="2" fill="#fff" stroke="#2fb4be" stroke-width="1"/>
<circle cx="482.2" cy="260.5" r="2" fill="#fff" stroke="#2fb4be" stroke-width="1"/>
<circle cx="499.9" cy="226.3" r="2" fill="#fff" stroke="#2fb4be" stroke-width="1"/>
<circle cx="517.6" cy="265.7" r="2" fill="#fff" stroke="#2fb4be" stroke-width="1"/>
<circle cx="535.3" cy="325.7" r="2" fill="#fff" stroke="#2fb4be" stroke-width="1"/>
<circle cx="553.0" cy="320.5" r="2" fill="#fff" stroke="#2fb4be" stroke-width="1"/>
<circle cx="570.7" cy="303.5" r="2" fill="#fff" stroke="#2fb4be" stroke-width="1"/>
<circle cx="588.4" cy="335.1" r="2" fill="#fff" stroke="#2fb4be" stroke-width="1"/>
<circle cx="606.0" cy="348.2" r="2" fill="#fff" stroke="#2fb4be" stroke-width="1"/>
<circle cx="623.7" cy="357.0" r="2" fill="#fff" stroke="#2fb4be" stroke-width="1"/>
<circle cx="641.4" cy="345.9" r="2" fill="#fff" stroke="#2fb4be" stroke-width="1"/>
<circle cx="659.1" cy="333.5" r="2" fill="#fff" stroke="#2fb4be" stroke-width="1"/>
<circle cx="676.8" cy="327.3" r="2" fill="#fff" stroke="#2fb4be" stroke-width="1"/>
<circle cx="694.5" cy="342.0" r="2" fill="#fff" stroke="#2fb4be" stroke-width="1"/>
<circle cx="712.2" cy="368.1" r="2" fill="#fff" stroke="#2fb4be" stroke-width="1"/>
<circle cx="729.9" cy="384.4" r="2" fill="#fff" stroke="#2fb4be" stroke-width="1"/>
<circle cx="747.6" cy="391.5" r="2" fill="#fff" stroke="#2fb4be" stroke-width="1"/>
<circle cx="765.3" cy="392.8" r="2" fill="#fff" stroke="#2fb4be" stroke-width="1"/>
<circle cx="783.0" cy="391.2" r="2" fill="#fff" stroke="#2fb4be" stroke-width="1"/>
<circle cx="800.7" cy="387.6" r="2" fill="#fff" stroke="#2fb4be" stroke-width="1"/>
<circle cx="818.4" cy="356.0" r="2" fill="#fff" stroke="#2fb4be" stroke-width="1"/>
<circle cx="836.1" cy="319.5" r="2" fill="#fff" stroke="#2fb4be" stroke-width="1"/>
<circle cx="853.8" cy="313.3" r="2" fill="#fff" stroke="#2fb4be" stroke-width="1"/>
<circle cx="871.5" cy="314.6" r="2" fill="#fff" stroke="#2fb4be" stroke-width="1"/>
<circle cx="889.1" cy="312.3" r="2" fill="#fff" stroke="#2fb4be" stroke-width="1"/>
<circle cx="906.8" cy="256.3" r="2" fill="#fff" stroke="#2fb4be" stroke-width="1"/>
<circle cx="924.5" cy="225.0" r="2" fill="#fff" stroke="#2fb4be" stroke-width="1"/>
<circle cx="942.2" cy="271.9" r="2" fill="#fff" stroke="#2fb4be" stroke-width="1"/>
<circle cx="959.9" cy="328.3" r="2" fill="#fff" stroke="#2fb4be" stroke-width="1"/>
<circle cx="977.6" cy="318.9" r="2" fill="#fff" stroke="#2fb4be" stroke-width="1"/>
<circle cx="995.3" cy="297.0" r="2" fill="#fff" stroke="#2fb4be" stroke-width="1"/>
<circle cx="1013.0" cy="331.6" r="2" fill="#fff" stroke="#2fb4be" stroke-width="1"/>
<circle cx="1030.7" cy="348.2" r="2" fill="#fff" stroke="#2fb4be" stroke-width="1"/>
<circle cx="1048.4" cy="358.0" r="2" fill="#fff" stroke="#2fb4be" stroke-width="1"/>
<circle cx="1066.1" cy="346.2" r="2" fill="#fff" stroke="#2fb4be" stroke-width="1"/>
<circle cx="1083.8" cy="335.5" r="2" fill="#fff" stroke="#2fb4be" stroke-width="1"/>
<circle cx="1101.5" cy="327.3" r="2" fill="#fff" stroke="#2fb4be" stroke-width="1"/>
<circle cx="1119.2" cy="341.3" r="2" fill="#fff" stroke="#2fb4be" stroke-width="1"/>
<circle cx="1136.9" cy="367.2" r="2" fill="#fff" stroke="#2fb4be" stroke-width="1"/>
<circle cx="1154.6" cy="384.0" r="2" fill="#fff" stroke="#2fb4be" stroke-width="1"/>
<polyline points="322.9,396.8 340.6,398.1 358.3,397.7 376.0,397.1 393.7,407.2 411.4,421.2 429.1,414.0 446.8,408.2 464.5,403.9 482.2,403.6 499.9,404.6 517.6,404.9 535.3,401.3 553.0,398.4 570.7,397.4 588.4,398.4 606.0,398.4 623.7,400.3 641.4,404.3 659.1,410.1 676.8,413.7 694.5,408.8 712.2,401.3 729.9,397.1 747.6,396.8 765.3,396.8 783.0,396.8 800.7,397.1 818.4,405.6 836.1,417.6 853.8,414.7 871.5,410.4 889.1,405.2 906.8,403.3 924.5,406.2 942.2,407.5 959.9,401.6 977.6,398.7 995.3,399.0 1013.0,398.4 1030.7,400.3 1048.4,402.0 1066.1,404.6 1083.8,408.8 1101.5,412.1 1119.2,408.5 1136.9,399.5 1154.6,395.8" fill="none" stroke="#f21a1a" stroke-width="2" stroke-linejoin="round"/>
<circle cx="322.9" cy="396.8" r="2" fill="#fff" stroke="#f21a1a" stroke-width="1"/>
<circle cx="340.6" cy="398.1" r="2" fill="#fff" stroke="#f21a1a" stroke-width="1"/>
<circle cx="358.3" cy="397.7" r="2" fill="#fff" stroke="#f21a1a" stroke-width="1"/>
<circle cx="376.0" cy="397.1" r="2" fill="#fff" stroke="#f21a1a" stroke-width="1"/>
<circle cx="393.7" cy="407.2" r="2" fill="#fff" stroke="#f21a1a" stroke-width="1"/>
<circle cx="411.4" cy="421.2" r="2" fill="#fff" stroke="#f21a1a" stroke-width="1"/>
<circle cx="429.1" cy="414.0" r="2" fill="#fff" stroke="#f21a1a" stroke-width="1"/>
<circle cx="446.8" cy="408.2" r="2" fill="#fff" stroke="#f21a1a" stroke-width="1"/>
<circle cx="464.5" cy="403.9" r="2" fill="#fff" stroke="#f21a1a" stroke-width="1"/>
<circle cx="482.2" cy="403.6" r="2" fill="#fff" stroke="#f21a1a" stroke-width="1"/>
<circle cx="499.9" cy="404.6" r="2" fill="#fff" stroke="#f21a1a" stroke-width="1"/>
<circle cx="517.6" cy="404.9" r="2" fill="#fff" stroke="#f21a1a" stroke-width="1"/>
<circle cx="535.3" cy="401.3" r="2" fill="#fff" stroke="#f21a1a" stroke-width="1"/>
<circle cx="553.0" cy="398.4" r="2" fill="#fff" stroke="#f21a1a" stroke-width="1"/>
<circle cx="570.7" cy="397.4" r="2" fill="#fff" stroke="#f21a1a" stroke-width="1"/>
<circle cx="588.4" cy="398.4" r="2" fill="#fff" stroke="#f21a1a" stroke-width="1"/>
<circle cx="606.0" cy="398.4" r="2" fill="#fff" stroke="#f21a1a" stroke-width="1"/>
<circle cx="623.7" cy="400.3" r="2" fill="#fff" stroke="#f21a1a" stroke-width="1"/>
<circle cx="641.4" cy="404.3" r="2" fill="#fff" stroke="#f21a1a" stroke-width="1"/>
<circle cx="659.1" cy="410.1" r="2" fill="#fff" stroke="#f21a1a" stroke-width="1"/>
<circle cx="676.8" cy="413.7" r="2" fill="#fff" stroke="#f21a1a" stroke-width="1"/>
<circle cx="694.5" cy="408.8" r="2" fill="#fff" stroke="#f21a1a" stroke-width="1"/>
<circle cx="712.2" cy="401.3" r="2" fill="#fff" stroke="#f21a1a" stroke-width="1"/>
<circle cx="729.9" cy="397.1" r="2" fill="#fff" stroke="#f21a1a" stroke-width="1"/>
<circle cx="747.6" cy="396.8" r="2" fill="#fff" stroke="#f21a1a" stroke-width="1"/>
<circle cx="765.3" cy="396.8" r="2" fill="#fff" stroke="#f21a1a" stroke-width="1"/>
<circle cx="783.0" cy="396.8" r="2" fill="#fff" stroke="#f21a1a" stroke-width="1"/>
<circle cx="800.7" cy="397.1" r="2" fill="#fff" stroke="#f21a1a" stroke-width="1"/>
<circle cx="818.4" cy="405.6" r="2" fill="#fff" stroke="#f21a1a" stroke-width="1"/>
<circle cx="836.1" cy="417.6" r="2" fill="#fff" stroke="#f21a1a" stroke-width="1"/>
<circle cx="853.8" cy="414.7" r="2" fill="#fff" stroke="#f21a1a" stroke-width="1"/>
<circle cx="871.5" cy="410.4" r="2" fill="#fff" stroke="#f21a1a" stroke-width="1"/>
<circle cx="889.1" cy="405.2" r="2" fill="#fff" stroke="#f21a1a" stroke-width="1"/>
<circle cx="906.8" cy="403.3" r="2" fill="#fff" stroke="#f21a1a" stroke-width="1"/>
<circle cx="924.5" cy="406.2" r="2" fill="#fff" stroke="#f21a1a" stroke-width="1"/>
<circle cx="942.2" cy="407.5" r="2" fill="#fff" stroke="#f21a1a" stroke-width="1"/>
<circle cx="959.9" cy="401.6" r="2" fill="#fff" stroke="#f21a1a" stroke-width="1"/>
<circle cx="977.6" cy="398.7" r="2" fill="#fff" stroke="#f21a1a" stroke-width="1"/>
<circle cx="995.3" cy="399.0" r="2" fill="#fff" stroke="#f21a1a" stroke-width="1"/>
<circle cx="1013.0" cy="398.4" r="2" fill="#fff" stroke="#f21a1a" stroke-width="1"/>
<circle cx="1030.7" cy="400.3" r="2" fill="#fff" stroke="#f21a1a" stroke-width="1"/>
<circle cx="1048.4" cy="402.0" r="2" fill="#fff" stroke="#f21a1a" stroke-width="1"/>
<circle cx="1066.1" cy="404.6" r="2" fill="#fff" stroke="#f21a1a" stroke-width="1"/>
<circle cx="1083.8" cy="408.8" r="2" fill="#fff" stroke="#f21a1a" stroke-width="1"/>
<circle cx="1101.5" cy="412.1" r="2" fill="#fff" stroke="#f21a1a" stroke-width="1"/>
<circle cx="1119.2" cy="408.5" r="2" fill="#fff" stroke="#f21a1a" stroke-width="1"/>
<circle cx="1136.9" cy="399.5" r="2" fill="#fff" stroke="#f21a1a" stroke-width="1"/>
<circle cx="1154.6" cy="395.8" r="2" fill="#fff" stroke="#f21a1a" stroke-width="1"/>
<path d="M340.640625 390.5C337.640625 382.5 329.140625 377.5 329.140625 370.5A11.5 11.5 0 1 1 352.140625 370.5C352.140625 377.5 343.640625 382.5 340.640625 390.5Z" fill="#2fb4be"/>
<text x="340.640625" y="377.0" font-size="12" fill="#fff" text-anchor="middle" stroke="#2fb4be" stroke-width="1.4" stroke-linejoin="round" paint-order="stroke">11.79</text>
<path d="M924.5343750000001 221.5C921.5343750000001 213.5 913.0343750000001 208.5 913.0343750000001 201.5A11.5 11.5 0 1 1 936.0343750000001 201.5C936.0343750000001 208.5 927.5343750000001 213.5 924.5343750000001 221.5Z" fill="#2fb4be"/>
<text x="924.5343750000001" y="208.0" font-size="12" fill="#fff" text-anchor="middle" stroke="#2fb4be" stroke-width="1.4" stroke-linejoin="round" paint-order="stroke">43.28</text>
<rect x="316.5" y="479" width="849.0" height="30" fill="#d8dee8"/>
<polygon points="316.5,509 316.5,502.7 334.6,502.8 352.6,502.7 370.7,502.2 388.8,498.7 406.8,494.6 424.9,493.9 442.9,494.0 461.0,493.9 479.1,488.0 497.1,484.1 515.2,488.6 533.3,495.3 551.3,494.7 569.4,492.8 587.5,496.4 605.5,497.8 623.6,498.8 641.6,497.6 659.7,496.2 677.8,495.5 695.8,497.1 713.9,500.1 732.0,501.9 750.0,502.7 768.1,502.9 786.2,502.7 804.2,502.3 822.3,498.7 840.4,494.6 858.4,493.9 876.5,494.1 894.5,493.8 912.6,487.5 930.7,484.0 948.7,489.3 966.8,495.6 984.9,494.5 1002.9,492.1 1021.0,496.0 1039.1,497.8 1057.1,498.9 1075.2,497.6 1093.2,496.4 1111.3,495.5 1129.4,497.1 1147.4,500.0 1165.5,501.9 1165.5,509" fill="#cbd2dc" stroke="#c3cad6" stroke-width="1"/>
<path d="M316.5 479V509 M1165.5 479V509" stroke="#a8b8cd" stroke-width="1.5"/>
<rect x="313.0" y="487.5" width="7" height="13" fill="#a8b8cd"/><path d="M314.5 491.5H318.5 M314.5 496H318.5" stroke="#eef" stroke-width="1"/>
<rect x="1162.0" y="487.5" width="7" height="13" fill="#a8b8cd"/><path d="M1163.5 491.5H1167.5 M1163.5 496H1167.5" stroke="#eef" stroke-width="1"/>
<rect x="1195" y="189" width="30" height="326.5" fill="#d8dee8"/>
<path d="M1195 189.5H1225" stroke="#a8b8cd" stroke-width="1.5"/>
<rect x="1203" y="185" width="13" height="8" fill="#a8b8cd"/><path d="M1207.5 187V191 M1211.5 187V191" stroke="#eef" stroke-width="1"/>
<text x="1178" y="459.5" font-size="12" fill="#555">时间</text>
</svg>
<div class="t" style="left:214px;top:527px;font-weight:bold;font-size:12px;color:#333">夜间最小流量记录</div>
<div class="a" style="left:209px;top:549px;width:1115px;height:24px;background:#ebebeb"></div>
<div class="a" style="left:209px;top:552px;width:29px;height:18px;background:#eff3fa"></div>
<div class="a" style="left:209px;top:573px;width:1115px;height:1px;background:#d4d4d4"></div>
<div class="a" style="left:209px;top:574px;width:29px;height:75px;background:#ebebeb"></div>
<div class="th" style="left:238px;width:80px">月份</div>
<div class="th" style="left:318px;width:120px">夜间最小流量(m³/h)</div>
<div class="th" style="left:438px;width:100px">压力(Mpa)</div>
<div class="th" style="left:539px;width:160px">用户夜间使用流量(m³/h)</div>
<div class="th" style="left:699px;width:160px">工业用户夜间使用流量(m³/h)</div>
<div class="th" style="left:858px;width:160px">计费未计量用水量(m³/h)</div>
<div class="th" style="left:1019px;width:160px">未计费未计量用水量(m³/h)</div>
<div class="a" style="left:238px;top:549px;width:0;height:100px;border-left:1px dotted #ccc"></div>
<div class="a" style="left:318px;top:549px;width:0;height:100px;border-left:1px dotted #ccc"></div>
<div class="a" style="left:438px;top:549px;width:0;height:100px;border-left:1px dotted #ccc"></div>
<div class="a" style="left:539px;top:549px;width:0;height:100px;border-left:1px dotted #ccc"></div>
<div class="a" style="left:699px;top:549px;width:0;height:100px;border-left:1px dotted #ccc"></div>
<div class="a" style="left:858px;top:549px;width:0;height:100px;border-left:1px dotted #ccc"></div>
<div class="a" style="left:1019px;top:549px;width:0;height:100px;border-left:1px dotted #ccc"></div>
<div class="a" style="left:1178px;top:549px;width:0;height:100px;border-left:1px dotted #ccc"></div>
<div class="td" style="left:209px;top:575px;width:29px;text-align:center;padding:0">1</div>
<div class="td" style="left:238px;top:575px">202206</div>
<div class="td" style="left:318px;top:575px">7.687</div>
<div class="td" style="left:438px;top:575px">0.093</div>
<div class="td" style="left:539px;top:575px">0.4</div>
<div class="td" style="left:699px;top:575px">0.3</div>
<div class="td" style="left:858px;top:575px">0.1</div>
<div class="td" style="left:1019px;top:575px">0.2</div>
<div class="a" style="left:209px;top:598px;width:970px;height:0;border-top:1px dotted #ccc"></div>
<div class="td" style="left:209px;top:600px;width:29px;text-align:center;padding:0">2</div>
<div class="td" style="left:238px;top:600px">202205</div>
<div class="td" style="left:318px;top:600px">11.9</div>
<div class="td" style="left:438px;top:600px">0.13</div>
<div class="td" style="left:539px;top:600px">0</div>
<div class="td" style="left:699px;top:600px">0</div>
<div class="td" style="left:858px;top:600px">0</div>
<div class="td" style="left:1019px;top:600px">0</div>
<div class="a" style="left:209px;top:623px;width:970px;height:0;border-top:1px dotted #ccc"></div>
<div class="td" style="left:209px;top:625px;width:29px;text-align:center;padding:0">3</div>
<div class="td" style="left:238px;top:625px">202204</div>
<div class="td" style="left:318px;top:625px">3.74</div>
<div class="td" style="left:438px;top:625px">0.091</div>
<div class="td" style="left:539px;top:625px">0</div>
<div class="td" style="left:699px;top:625px">0</div>
<div class="td" style="left:858px;top:625px">0</div>
<div class="td" style="left:1019px;top:625px">0</div>
<div class="a" style="left:209px;top:648px;width:970px;height:0;border-top:1px dotted #ccc"></div>
<div class="a" style="left:209px;top:801px;width:1115px;height:31px;background:#f4f4f4;border-top:1px solid #ddd"></div>
<div class="a" style="left:215px;top:807px;width:48px;height:21px;background:#e9e9eb;border:1px solid #b9cfdc"></div>
<div class="t" style="left:222px;top:809px;font-size:14px;color:#000;line-height:19px">20</div>
<svg class="a" style="left:248px;top:814px" width="11" height="8"><path d="M1 1.5L5 5.5L9 1.5" fill="none" stroke="#222" stroke-width="1.6"/></svg>
<div class="a" style="left:270px;top:806px;width:1px;height:22px;background:#d6d6d6;border-right:1px solid #fff"></div>
<div class="a" style="left:343px;top:806px;width:1px;height:22px;background:#d6d6d6;border-right:1px solid #fff"></div>
<div class="a" style="left:536px;top:806px;width:1px;height:22px;background:#d6d6d6;border-right:1px solid #fff"></div>
<div class="a" style="left:609px;top:806px;width:1px;height:22px;background:#d6d6d6;border-right:1px solid #fff"></div>
<svg class="a" style="left:287px;top:811px" width="12" height="12"><rect x="1" y="1" width="2" height="10" fill="#6db6ec"/><path d="M10 1V11L4 6Z" fill="#6db6ec"/></svg>
<svg class="a" style="left:324px;top:811px" width="10" height="12"><path d="M7 1V11L1 6Z" fill="#6db6ec"/></svg>
<div class="t" style="left:352px;top:809px;font-size:12px;color:#333">第</div>
<div class="a" style="left:366px;top:806px;width:130px;height:23px;background:#fff;border:1px solid #a9cde0;border-radius:3px"></div>
<div class="t" style="left:369px;top:809px;font-size:14px;color:#000">1</div>
<div class="t" style="left:497px;top:809px;font-size:12px;color:#333">共1页</div>
<svg class="a" style="left:554px;top:811px" width="10" height="12"><path d="M2 1V11L8 6Z" fill="#6db6ec"/></svg>
<svg class="a" style="left:588px;top:811px" width="12" height="12"><path d="M2 1V11L8 6Z" fill="#6db6ec"/><rect x="9" y="1" width="2" height="10" fill="#6db6ec"/></svg>
<svg class="a" style="left:625px;top:810px" width="13" height="14"><path d="M10.5 5.5A4.8 4.8 0 1 1 6.5 2.7" fill="none" stroke="#3a8ee0" stroke-width="1.7"/><path d="M5.5 0L10 2.8L5.5 5.5Z" fill="#3a8ee0"/></svg>
<div class="t" style="left:1222px;top:809px;font-size:12px;color:#333">显示1到3,共3记录</div>
<div class="a" style="left:1332px;top:47px;width:345px;height:788px;background:#fafafa;border:1px solid #c3d9e0"></div>
<div class="t" style="left:1338px;top:53px;font-weight:bold;font-size:12px;color:#333">夜间最小流量设置</div>
<svg class="a" style="left:1658px;top:55px" width="11" height="12"><path d="M1 1L5.5 6L1 11M5.5 1L10 6L5.5 11" fill="none" stroke="#5aaef0" stroke-width="1.4"/></svg>
<div class="a" style="left:1333px;top:75px;width:343px;height:28px;background:#c5e4fd"></div>
<div class="rc" style="left:1334px;top:76px;width:183px;line-height:28px">项目</div>
<div class="rc" style="left:1518px;top:76px;width:157px;line-height:28px">值</div>
<div class="a" style="left:1333px;top:103px;width:343px;height:27px;background:#e2f2f9"></div>
<div class="rc" style="left:1334px;top:104px;width:183px;line-height:27px">区域名称</div>
<div class="rc" style="left:1518px;top:104px;width:157px;line-height:27px">北虹村</div>
<div class="a" style="left:1333px;top:130px;width:343px;height:28px;background:#c5e4fd"></div>
<div class="rc" style="left:1334px;top:131px;width:183px;line-height:28px">区域管长</div>
<div class="rc" style="left:1518px;top:131px;width:157px;line-height:28px">2429.4Km</div>
<div class="a" style="left:1333px;top:158px;width:343px;height:27px;background:#e2f2f9"></div>
<div class="rc" style="left:1334px;top:159px;width:183px;line-height:27px">区域用户</div>
<div class="rc" style="left:1518px;top:159px;width:157px;line-height:27px">689人</div>
<div class="a" style="left:1333px;top:185px;width:343px;height:28px;background:#c5e4fd"></div>
<div class="rc" style="left:1334px;top:186px;width:183px;line-height:28px">区域面积</div>
<div class="rc" style="left:1518px;top:186px;width:157px;line-height:28px">2652.04m³</div>
<div class="a" style="left:1333px;top:213px;width:343px;height:27px;background:#e2f2f9"></div>
<div class="rc" style="left:1334px;top:214px;width:183px;line-height:27px">阀门数量</div>
<div class="rc" style="left:1518px;top:214px;width:157px;line-height:27px">3个</div>
<div class="a" style="left:1333px;top:240px;width:343px;height:28px;background:#c5e4fd"></div>
<div class="rc" style="left:1334px;top:241px;width:183px;line-height:28px">消防栓数量</div>
<div class="rc" style="left:1518px;top:241px;width:157px;line-height:28px">0个</div>
<div class="a" style="left:1333px;top:268px;width:343px;height:27px;background:#e2f2f9"></div>
<div class="rc" style="left:1334px;top:269px;width:183px;line-height:27px">夜间最小流量</div>
<div class="rc" style="left:1518px;top:269px;width:157px;line-height:27px">7.687m³/h</div>
<div class="a" style="left:1333px;top:295px;width:343px;height:28px;background:#c5e4fd"></div>
<div class="rc" style="left:1334px;top:296px;width:183px;line-height:28px">夜间最小流量时间</div>
<div class="rc" style="left:1518px;top:296px;width:157px;line-height:28px">202206</div>
<div class="a" style="left:1333px;top:323px;width:343px;height:27px;background:#e2f2f9"></div>
<div class="rc" style="left:1334px;top:324px;width:183px;line-height:27px">最小流量时平均压力</div>
<div class="rc" style="left:1518px;top:324px;width:157px;line-height:27px">0.093mPa</div>
<div class="a" style="left:1333px;top:350px;width:343px;height:28px;background:#c5e4fd"></div>
<div class="rc" style="left:1334px;top:351px;width:183px;line-height:28px">漏损计算公式</div>
<div class="rc" style="left:1518px;top:351px;width:157px;line-height:28px">L1/L2=(H1/H2)½</div>
<div class="a" style="left:1333px;top:378px;width:343px;height:75px;background:#e2f2f9"></div>
<div class="rc" style="left:1334px;top:384.5px;width:341px;line-height:16.1px;white-space:normal">漏损指数会发生变化，固定的漏损口漏损指数约为0.5，<br>变化的漏口漏损指数约为1.5.真实漏损量由压力变化引起，<br>根据FAVAD可以得到压力与漏损量关系<br>L1/L2=(H1/H2)½</div>
<div class="a" style="left:1333px;top:453px;width:343px;height:28px;background:#c5e4fd"></div>
<div class="rc" style="left:1334px;top:454px;width:341px;line-height:28px">注：L1和L2是漏损速率（ m³/h ）,H1和H2是压力水头（ m ）</div>
<div class="a" style="left:1333px;top:75px;width:343px;height:1px;background:#0f5aa5"></div>
<div class="a" style="left:1333px;top:103px;width:343px;height:1px;background:#0f5aa5"></div>
<div class="a" style="left:1333px;top:130px;width:343px;height:1px;background:#0f5aa5"></div>
<div class="a" style="left:1333px;top:158px;width:343px;height:1px;background:#0f5aa5"></div>
<div class="a" style="left:1333px;top:185px;width:343px;height:1px;background:#0f5aa5"></div>
<div class="a" style="left:1333px;top:213px;width:343px;height:1px;background:#0f5aa5"></div>
<div class="a" style="left:1333px;top:240px;width:343px;height:1px;background:#0f5aa5"></div>
<div class="a" style="left:1333px;top:268px;width:343px;height:1px;background:#0f5aa5"></div>
<div class="a" style="left:1333px;top:295px;width:343px;height:1px;background:#0f5aa5"></div>
<div class="a" style="left:1333px;top:323px;width:343px;height:1px;background:#0f5aa5"></div>
<div class="a" style="left:1333px;top:350px;width:343px;height:1px;background:#0f5aa5"></div>
<div class="a" style="left:1333px;top:378px;width:343px;height:1px;background:#0f5aa5"></div>
<div class="a" style="left:1333px;top:453px;width:343px;height:1px;background:#0f5aa5"></div>
<div class="a" style="left:1333px;top:481px;width:343px;height:1px;background:#0f5aa5"></div>
<div class="a" style="left:1333px;top:75px;width:1px;height:407px;background:#0f5aa5"></div>
<div class="a" style="left:1675px;top:75px;width:1px;height:407px;background:#0f5aa5"></div>
<div class="a" style="left:1517px;top:75px;width:1px;height:303px;background:#0f5aa5"></div>
<div class="a" style="left:0;top:858px;width:1687px;height:1px;background:#111"></div>
</body></html>
